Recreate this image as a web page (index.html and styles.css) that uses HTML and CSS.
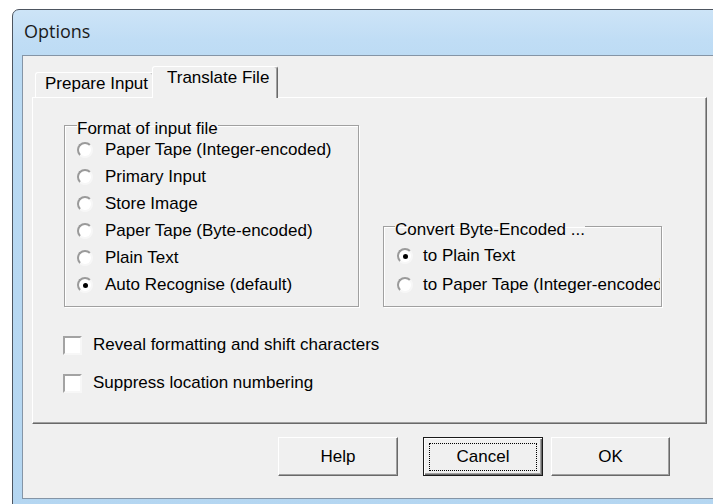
FILE: index.html
```html
<!DOCTYPE html>
<html lang="en">
<head>
<meta charset="utf-8">
<title>Options</title>
<link rel="stylesheet" href="styles.css">
</head>
<body>
<div class="window">
  <div class="titlebar"><span class="title">Options</span></div>
  <div class="client">
    <div class="tabs">
      <div class="tab">Prepare Input</div>
      <div class="tab tab-active">Translate File</div>
    </div>
    <div class="panel">
      <div class="groups">
        <fieldset class="group group-format">
          <legend>Format of input file</legend>
          <div class="options">
            <label class="opt"><span class="radio"></span>Paper Tape (Integer-encoded)</label>
            <label class="opt"><span class="radio"></span>Primary Input</label>
            <label class="opt"><span class="radio"></span>Store Image</label>
            <label class="opt"><span class="radio"></span>Paper Tape (Byte-encoded)</label>
            <label class="opt"><span class="radio"></span>Plain Text</label>
            <label class="opt"><span class="radio radio-on"></span>Auto Recognise (default)</label>
          </div>
        </fieldset>
        <fieldset class="group group-convert">
          <legend>Convert Byte-Encoded ...</legend>
          <div class="options">
            <label class="opt"><span class="radio radio-on"></span>to Plain Text</label>
            <label class="opt"><span class="radio"></span>to Paper Tape (Integer-encoded)</label>
          </div>
        </fieldset>
      </div>
      <div class="checks">
        <label class="check"><span class="box"></span>Reveal formatting and shift characters</label>
        <label class="check"><span class="box"></span>Suppress location numbering</label>
      </div>
    </div>
    <div class="buttons">
      <button class="btn btn-help" type="button">Help</button>
      <button class="btn btn-default" type="button"><span class="focus">Cancel</span></button>
      <button class="btn btn-ok" type="button">OK</button>
    </div>
  </div>
</div>
</body>
</html>
```
FILE: styles.css
```css
html, body {
  margin: 0;
  padding: 0;
}

body {
  width: 713px;
  height: 504px;
  overflow: hidden;
  background: #fff;
  font-family: "Liberation Sans", Arial, sans-serif;
  font-size: 17px;
  color: #000;
}

/* Window frame with the Aero Basic blue border */
.window {
  margin: 9px 0 0 12px;
  width: 740px;
  height: 520px;
  box-sizing: border-box;
  border: 1px solid #4d5560;
  border-radius: 7px 7px 0 0;
  padding-left: 9px;
  background: linear-gradient(180deg, #cde4f7 0px, #c0ddf5 30px, #badaf3 60px, #b4d6f1 100%);
}

.titlebar {
  height: 45px;
  box-sizing: border-box;
  padding: 9px 0 0 2px;
  font-family: "Open Sans", "Noto Sans", sans-serif;
  font-size: 18px;
  line-height: 24px;
  color: #1b1b1b;
}

/* Dialog client area */
.client {
  height: 444px;
  box-sizing: border-box;
  border: 1px solid #8595a6;
  border-right: none;
  background: #f0f0f0;
  padding: 10px 0 0 9px;
}

/* Tab strip */
.tabs {
  display: flex;
  align-items: flex-end;
  height: 31px;
  padding-left: 3px;
  position: relative;
  z-index: 1;
}

.tab {
  width: 119px;
  height: 25px;
  box-sizing: border-box;
  border: 1px solid;
  border-color: #fff #696969 transparent #fff;
  border-bottom: none;
  border-radius: 3px 3px 0 0;
  box-shadow: inset -1px 0 0 #a0a0a0;
  background: #f0f0f0;
  padding: 1px 0 0 9px;
  line-height: 20px;
  white-space: nowrap;
}

.tab-active {
  width: 126px;
  height: 32px;
  margin-left: -2px;
  margin-bottom: -1px;
  padding: 1px 0 0 14px;
}

/* Tab page */
.panel {
  width: 675px;
  height: 327px;
  box-sizing: border-box;
  border: 1px solid;
  border-color: #fff #696969 #696969 #fff;
  box-shadow: inset -1px -1px 0 #a0a0a0;
  padding: 14px 0 0 31px;
}

.groups {
  display: flex;
  align-items: flex-end;
  gap: 24px;
}

.group {
  margin: 0;
  min-width: 0;
  box-sizing: border-box;
  border: 1px solid #a0a0a0;
  box-shadow: inset 1px 1px 0 #fff, 1px 1px 0 #fff;
}

.group legend {
  padding: 7px 0 0 0;
  line-height: 20px;
  white-space: nowrap;
}

.options {
  display: flex;
  flex-direction: column;
}

.opt {
  display: flex;
  align-items: center;
  height: 20px;
  line-height: 20px;
  white-space: nowrap;
}

.group-format {
  width: 295px;
  padding: 0 0 11px 12px;
}

.group-format .options {
  padding-top: 1px;
  gap: 7px;
}

.group-format .radio {
  margin-right: 12px;
}

.group-convert {
  width: 279px;
  padding: 0 0 11px 11px;
}

.group-convert .options {
  padding-top: 6px;
  gap: 9px;
  margin: 0 1px 0 2px;
  overflow: hidden;
}

.group-convert .radio {
  margin-right: 10px;
}

/* Classic sunken radio button */
.radio {
  flex: none;
  width: 16px;
  height: 16px;
  box-sizing: border-box;
  border-radius: 50%;
  border: 2px solid;
  border-color: #9a9a9a #f7f7f7 #f7f7f7 #9a9a9a;
  background: #fff;
  display: flex;
  align-items: center;
  justify-content: center;
}

.radio-on::after {
  content: "";
  width: 5px;
  height: 5px;
  border-radius: 50%;
  background: #000;
}

/* Check boxes */
.checks {
  display: flex;
  flex-direction: column;
  gap: 18px;
  margin: 28px 0 0 -1px;
}

.check {
  display: flex;
  align-items: center;
  height: 20px;
  line-height: 20px;
  white-space: nowrap;
}

.box {
  flex: none;
  width: 19px;
  height: 19px;
  box-sizing: border-box;
  margin-right: 11px;
  border: 2px solid;
  border-color: #a3a3a3 #f7f7f7 #f7f7f7 #a3a3a3;
  background: #fff;
}

/* Dialog buttons */
.buttons {
  display: flex;
  margin-top: 13px;
  padding-left: 246px;
}

.btn {
  width: 120px;
  height: 39px;
  box-sizing: border-box;
  padding: 0;
  margin: 0;
  font-family: "Liberation Sans", Arial, sans-serif;
  font-size: 17px;
  color: #000;
  background: #f0f0f0;
  border: 1px solid;
  border-color: #fff #696969 #696969 #fff;
  box-shadow: inset -1px -1px 0 #a0a0a0;
  border-radius: 0;
  display: flex;
  align-items: center;
  justify-content: center;
}

.btn-default {
  margin-left: 25px;
  border-color: #1a1a1a;
  box-shadow: inset 1px 1px 0 #fff, inset -1px -1px 0 #696969, inset -2px -2px 0 #a0a0a0;
}

.btn-ok {
  margin-left: 8px;
  width: 119px;
}

.focus {
  width: 108px;
  height: 28px;
  box-sizing: border-box;
  border: 1px dotted #000;
  line-height: 26px;
  text-align: center;
}
```
